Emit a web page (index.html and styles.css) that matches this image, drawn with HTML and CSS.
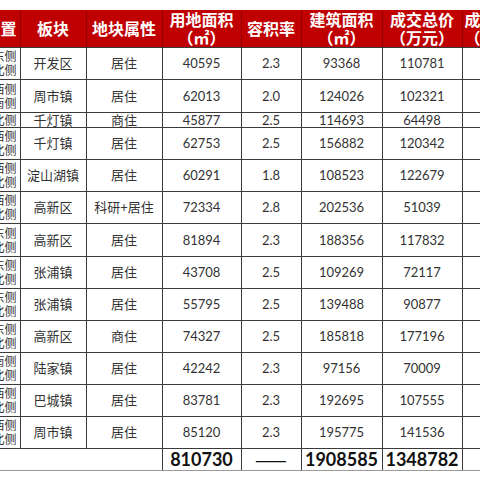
FILE: index.html
```html
<!DOCTYPE html>
<html lang="zh">
<head>
<meta charset="utf-8">
<title>土地成交</title>
<link rel="stylesheet" href="styles.css">
</head>
<body>
<div class="sheet">
<table class="land">
<colgroup>
<col class="c0"><col class="c1"><col class="c2"><col class="c3"><col class="c4"><col class="c5"><col class="c6"><col class="c7">
</colgroup>
<thead>
<tr class="head">
<th class="edge"><div class="clip">位置</div></th>
<th>板块</th>
<th>地块属性</th>
<th>用地面积<br>（㎡）</th>
<th>容积率</th>
<th>建筑面积<br>（㎡）</th>
<th>成交总价<br>（万元）</th>
<th class="last"><div class="cut">成交楼面价<br>（元/㎡）</div></th>
</tr>
</thead>
<tbody>
<tr class="h32"><td class="edge"><div class="clip">东侧<br>北侧</div></td><td>开发区</td><td>居住</td><td>40595</td><td>2.3</td><td>93368</td><td>110781</td><td></td></tr>
<tr class="h33"><td class="edge"><div class="clip">西侧<br>南侧</div></td><td>周市镇</td><td>居住</td><td>62013</td><td>2.0</td><td>124026</td><td>102321</td><td></td></tr>
<tr class="h15"><td class="edge"><div class="clip">北侧</div></td><td>千灯镇</td><td>商住</td><td>45877</td><td>2.5</td><td>114693</td><td>64498</td><td></td></tr>
<tr class="h32"><td class="edge"><div class="clip">西侧<br>北侧</div></td><td>千灯镇</td><td>居住</td><td>62753</td><td>2.5</td><td>156882</td><td>120342</td><td></td></tr>
<tr class="h32"><td class="edge"><div class="clip">西侧<br>北侧</div></td><td>淀山湖镇</td><td>居住</td><td>60291</td><td>1.8</td><td>108523</td><td>122679</td><td></td></tr>
<tr class="h32"><td class="edge"><div class="clip">西侧<br>北侧</div></td><td>高新区</td><td>科研+居住</td><td>72334</td><td>2.8</td><td>202536</td><td>51039</td><td></td></tr>
<tr class="h33"><td class="edge"><div class="clip">东侧<br>北侧</div></td><td>高新区</td><td>居住</td><td>81894</td><td>2.3</td><td>188356</td><td>117832</td><td></td></tr>
<tr class="h32"><td class="edge"><div class="clip">东侧<br>北侧</div></td><td>张浦镇</td><td>居住</td><td>43708</td><td>2.5</td><td>109269</td><td>72117</td><td></td></tr>
<tr class="h32"><td class="edge"><div class="clip">东侧<br>北侧</div></td><td>张浦镇</td><td>居住</td><td>55795</td><td>2.5</td><td>139488</td><td>90877</td><td></td></tr>
<tr class="h32"><td class="edge"><div class="clip">东侧<br>北侧</div></td><td>高新区</td><td>商住</td><td>74327</td><td>2.5</td><td>185818</td><td>177196</td><td></td></tr>
<tr class="h32"><td class="edge"><div class="clip">南侧<br>北侧</div></td><td>陆家镇</td><td>居住</td><td>42242</td><td>2.3</td><td>97156</td><td>70009</td><td></td></tr>
<tr class="h32"><td class="edge"><div class="clip">西侧<br>北侧</div></td><td>巴城镇</td><td>居住</td><td>83781</td><td>2.3</td><td>192695</td><td>107555</td><td></td></tr>
<tr class="h32"><td class="edge"><div class="clip">西侧<br>北侧</div></td><td>周市镇</td><td>居住</td><td>85120</td><td>2.3</td><td>195775</td><td>141536</td><td></td></tr>
</tbody>
<tfoot>
<tr class="total">
<td class="edge" colspan="3"></td>
<td>810730</td>
<td><span class="dash">——</span></td>
<td>1908585</td>
<td>1348782</td>
<td></td>
</tr>
</tfoot>
</table>
</div>
</body>
</html>
```

FILE: styles.css
```css
html, body {
  margin: 0;
  padding: 0;
  background: #ffffff;
}

body {
  width: 480px;
  height: 480px;
  overflow: hidden;
}

.sheet {
  padding-top: 10px;
}

.land {
  border-collapse: collapse;
  table-layout: fixed;
  width: 480px;
  font-family: Lato, "Noto Sans CJK SC", sans-serif;
  font-size: 13px;
  line-height: 14px;
  color: #333333;
}

.c0 { width: 20px; }
.c1 { width: 66px; }
.c2 { width: 76px; }
.c3 { width: 79px; }
.c4 { width: 60px; }
.c5 { width: 81px; }
.c6 { width: 80px; }
.c7 { width: 18px; }

.land th,
.land td {
  border: 1px solid #3a3a3a;
  padding: 0;
  text-align: center;
  vertical-align: middle;
  white-space: nowrap;
}

.land th {
  background: #c00000;
  color: #ffffff;
  font-family: "Noto Sans CJK SC", sans-serif;
  font-weight: 700;
  font-size: 16px;
  line-height: 18px;
  border-color: #900000;
  border-top: none;
  border-bottom-color: #3a3a3a;
}

.land .edge {
  border-left: none;
  overflow: hidden;
}

.land .last {
  border-right: none;
  overflow: hidden;
}

.clip {
  direction: rtl;
  text-align: right;
  padding-right: 3px;
  overflow: hidden;
  white-space: nowrap;
  font-family: "Noto Sans CJK SC", sans-serif;
  font-size: 12px;
  line-height: 14px;
}

.land th .clip {
  font-size: 16px;
  line-height: 18px;
}

.cut {
  text-align: left;
  padding-left: 2px;
  overflow: hidden;
  white-space: nowrap;
}

.head { height: 37px; }
.h32 { height: 32px; }
.h33 { height: 33px; }
.h15 { height: 15px; }

.total {
  height: 22px;
}

.total td {
  font-weight: 700;
  font-size: 18px;
  line-height: 20px;
  color: #111111;
  border-bottom-color: #9a9a9a;
}

.dash {
  font-family: "Noto Sans CJK SC", sans-serif;
  font-weight: 400;
  font-size: 19px;
  color: #111111;
}
```
